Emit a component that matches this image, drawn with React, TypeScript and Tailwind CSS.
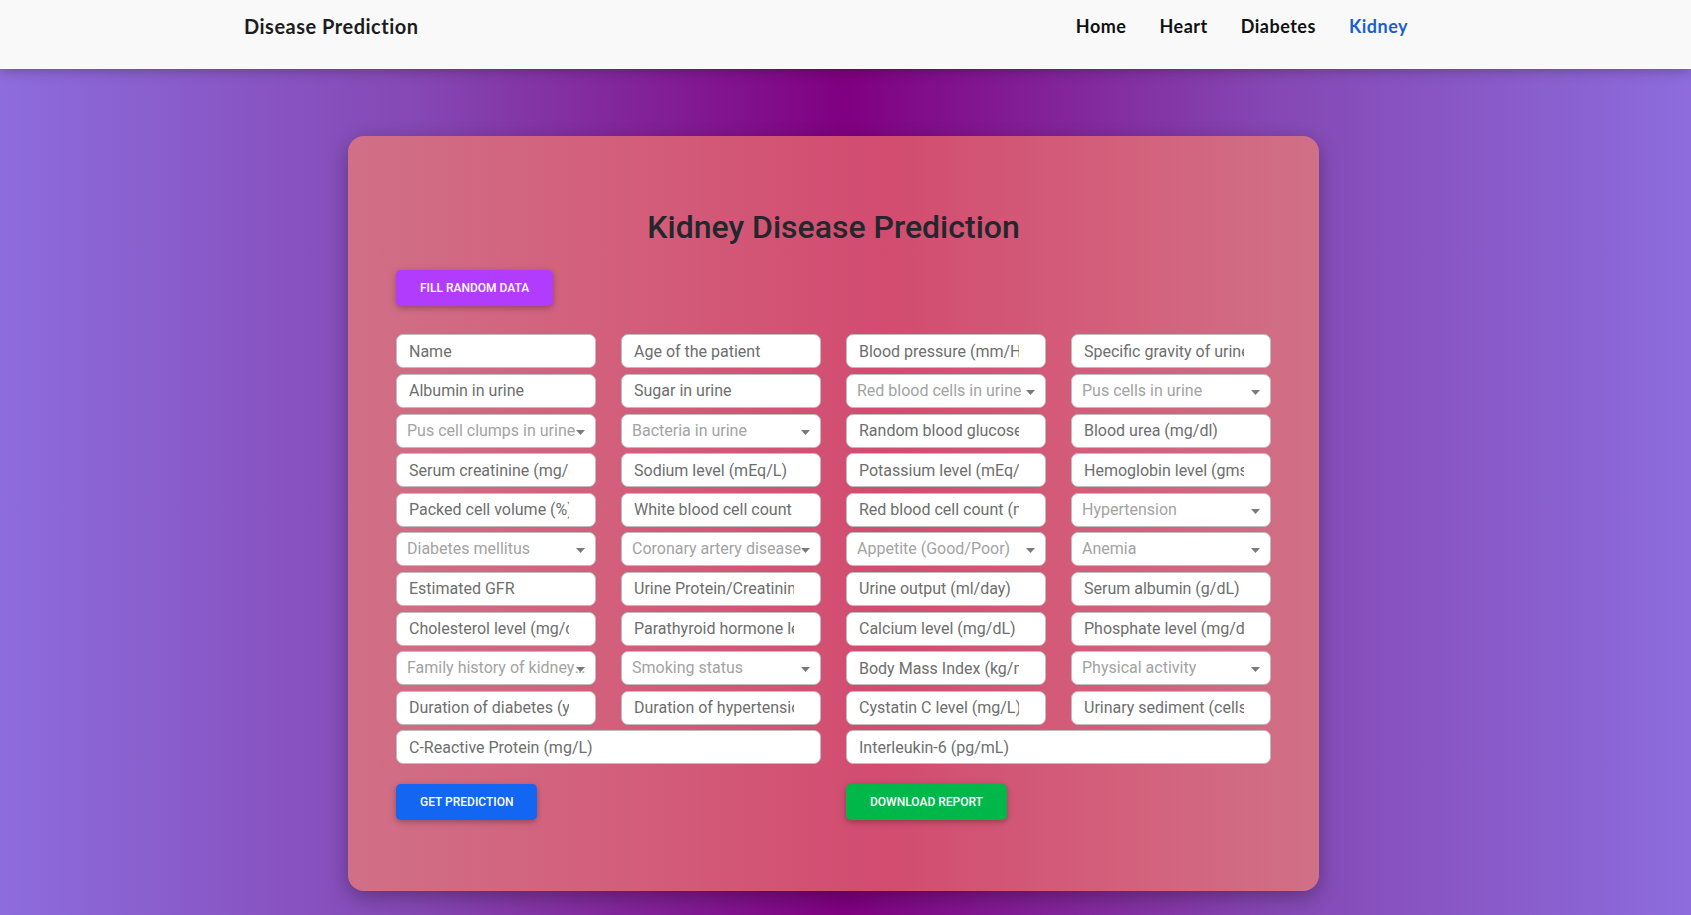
import React from "react"

type Field = {
    label: string;
    kind: "input" | "select";
    wide?: boolean;
}

const fields: Field[] = [
    { label: "Name", kind: "input" },
    { label: "Age of the patient", kind: "input" },
    { label: "Blood pressure (mm/Hg)", kind: "input" },
    { label: "Specific gravity of urine", kind: "input" },
    { label: "Albumin in urine", kind: "input" },
    { label: "Sugar in urine", kind: "input" },
    { label: "Red blood cells in urine", kind: "select" },
    { label: "Pus cells in urine", kind: "select" },
    { label: "Pus cell clumps in urine", kind: "select" },
    { label: "Bacteria in urine", kind: "select" },
    { label: "Random blood glucose (mg/dl)", kind: "input" },
    { label: "Blood urea (mg/dl)", kind: "input" },
    { label: "Serum creatinine (mg/dl)", kind: "input" },
    { label: "Sodium level (mEq/L)", kind: "input" },
    { label: "Potassium level (mEq/L)", kind: "input" },
    { label: "Hemoglobin level (gms)", kind: "input" },
    { label: "Packed cell volume (%)", kind: "input" },
    { label: "White blood cell count", kind: "input" },
    { label: "Red blood cell count (millions/cmm)", kind: "input" },
    { label: "Hypertension", kind: "select" },
    { label: "Diabetes mellitus", kind: "select" },
    { label: "Coronary artery disease", kind: "select" },
    { label: "Appetite (Good/Poor)", kind: "select" },
    { label: "Anemia", kind: "select" },
    { label: "Estimated GFR", kind: "input" },
    { label: "Urine Protein/Creatinine ratio", kind: "input" },
    { label: "Urine output (ml/day)", kind: "input" },
    { label: "Serum albumin (g/dL)", kind: "input" },
    { label: "Cholesterol level (mg/dL)", kind: "input" },
    { label: "Parathyroid hormone level", kind: "input" },
    { label: "Calcium level (mg/dL)", kind: "input" },
    { label: "Phosphate level (mg/dL)", kind: "input" },
    { label: "Family history of kidney disease", kind: "select" },
    { label: "Smoking status", kind: "select" },
    { label: "Body Mass Index (kg/m²)", kind: "input" },
    { label: "Physical activity", kind: "select" },
    { label: "Duration of diabetes (years)", kind: "input" },
    { label: "Duration of hypertension (years)", kind: "input" },
    { label: "Cystatin C level (mg/L)", kind: "input" },
    { label: "Urinary sediment (cells/hpf)", kind: "input" },
    { label: "C-Reactive Protein (mg/L)", kind: "input", wide: true },
    { label: "Interleukin-6 (pg/mL)", kind: "input", wide: true },
]

function FormField({ field }: { field: Field }) {
    if (field.kind === "select") {
        return (
            <div className="relative h-[34px] bg-white border border-[#bdbdbd] rounded-[7px] flex items-center pl-[10px] pr-[8px] cursor-pointer">
                <span className="truncate text-[16px] text-[#a3a3a3]">{field.label}</span>
                <svg className="absolute right-[10px] top-[15px]" width="9" height="5" viewBox="0 0 9 5">
                    <polygon points="0,0 9,0 4.5,5" fill="#7a7a7a" />
                </svg>
            </div>
        )
    }

    return (
        <input
            type="text"
            placeholder={field.label}
            className={`h-[34px] w-full min-w-0 bg-white border border-[#bdbdbd] rounded-[7px] pl-3 pr-[26px] text-[16px] 
            text-[#333] placeholder:text-[#6e6e6e] outline-none ${field.wide ? 'col-span-2' : ''}`}
        />
    )
}

export default function App() {
    const navItems = ["Home", "Heart", "Diabetes", "Kidney"];

    return (
        <div className="min-h-screen w-full bg-[linear-gradient(to_right,#8d6cdd_0%,#8547b3_25%,#800080_50%,#8547b3_75%,#8d6cdd_100%)] pb-[23px] font-['Roboto',sans-serif]">
            <header className="relative z-10 h-[69px] bg-[#f9f9f9] shadow-[0_2px_12px_rgba(0,0,0,0.25)] flex justify-between items-start pt-[13px] pl-[244px] pr-[283px] font-['Lato',sans-serif]">
                <span className="text-[20px] font-bold text-[#1d1d1d] leading-[27px] tracking-[0.5px]">Disease Prediction</span>
                <nav className="flex gap-[33px]">
                    {navItems.map(item => (
                        <a
                            key={item}
                            className={`text-[18px] font-bold leading-[27px] tracking-[0.5px] cursor-pointer ${item === 'Kidney' ? 'text-[#1a5fcf]' : 'text-[#111]'}`}
                        >
                            {item}
                        </a>
                    ))}
                </nav>
            </header>

            <div className="ml-[348px] mt-[67px] w-[971px] rounded-[16px] bg-[linear-gradient(to_right,#d07087_0%,#d35d7b_30%,#d24c70_55%,#d3607c_80%,#d07087_100%)] 
            shadow-[0_6px_20px_rgba(0,0,0,0.3)] pt-[72px] pb-[71px] px-[48px]">
                <h2 className="text-center text-[32px] font-medium leading-[1.2] text-[#23272b]">
                    Kidney Disease Prediction
                </h2>

                <button
                    type="button"
                    className="mt-[24px] h-[36px] px-[24px] rounded-[5px] bg-[#b23cfd] text-white text-[12px] font-medium uppercase 
                    shadow-[0_2px_5px_rgba(0,0,0,0.2),0_2px_10px_rgba(0,0,0,0.1)]"
                >
                    Fill Random Data
                </button>

                <div className="mt-[28px] grid grid-cols-4 gap-x-[25px] gap-y-[5.6px]">
                    {fields.map(field => (
                        <FormField key={field.label} field={field} />
                    ))}
                </div>

                <div className="mt-[20px] grid grid-cols-2 gap-x-[25px]">
                    <button
                        type="button"
                        className="justify-self-start h-[36px] px-[24px] rounded-[5px] bg-[#1266f1] text-white text-[12px] font-medium uppercase 
                        shadow-[0_2px_5px_rgba(0,0,0,0.2),0_2px_10px_rgba(0,0,0,0.1)]"
                    >
                        Get Prediction
                    </button>
                    <button
                        type="button"
                        className="justify-self-start h-[36px] px-[24px] rounded-[5px] bg-[#00b74a] text-white text-[12px] font-medium uppercase 
                        shadow-[0_2px_5px_rgba(0,0,0,0.2),0_2px_10px_rgba(0,0,0,0.1)]"
                    >
                        Download Report
                    </button>
                </div>
            </div>
        </div>
    )
}
